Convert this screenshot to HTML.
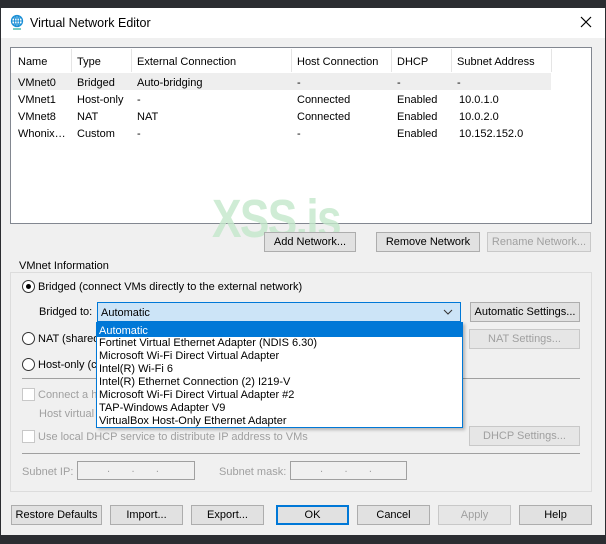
<!DOCTYPE html>
<html><head><meta charset="utf-8"><style>
*{box-sizing:border-box;margin:0;padding:0}
body{width:606px;height:544px;background:#2b2d31;position:relative;overflow:hidden;font-family:"Liberation Sans",sans-serif;font-size:11px;color:#000}
.a{position:absolute;white-space:nowrap}
.win{position:absolute;left:1px;top:8px;width:604px;height:527px;background:#f0f0f0}
.title{position:absolute;left:1px;top:8px;width:604px;height:30px;background:#fff}
.btn{position:absolute;height:20px;border:1px solid #adadad;background:#e1e1e1;text-align:center;line-height:19px}
.dis{color:#a0a0a0;border-color:#c8c8c8;background:#e6e6e6}
.radio{position:absolute;width:13px;height:13px;border:1px solid #333;border-radius:50%;background:#fff}
.chk{position:absolute;width:13px;height:13px;border:1px solid #c8c8c8;background:#fff}
.g{color:#a0a0a0}
</style></head><body>
<div class="win"></div>
<div class="title"></div>
<svg class="a" style="left:10px;top:14px" width="14" height="16" viewBox="0 0 14 16"><circle cx="7" cy="7" r="5.5" fill="none" stroke="#1a8fd6" stroke-width="1.3"/><path d="M1.5 7h11M7 1.5v11M3 4h8M3 10h8" stroke="#1a8fd6" stroke-width="1"/><ellipse cx="7" cy="7" rx="2.5" ry="5.5" fill="none" stroke="#1a8fd6"/><path d="M3 15h8" stroke="#2a9" stroke-width="1.2"/></svg>
<div class="a" style="left:30px;top:16px;font-size:12.5px">Virtual Network Editor</div>
<svg class="a" style="left:580px;top:16px" width="12" height="12"><path d="M1 1L11 11M11 1L1 11" stroke="#000" stroke-width="1.2"/></svg>

<div class="a" style="left:10px;top:47px;width:582px;height:177px;background:#fff;border:1px solid #828790"></div>
<div class="a" style="left:11px;top:73px;width:540px;height:17px;background:#eeeeee"></div>
<div class="a" style="left:71px;top:49px;width:1px;height:23px;background:#e5e5e5"></div>
<div class="a" style="left:131px;top:49px;width:1px;height:23px;background:#e5e5e5"></div>
<div class="a" style="left:291px;top:49px;width:1px;height:23px;background:#e5e5e5"></div>
<div class="a" style="left:391px;top:49px;width:1px;height:23px;background:#e5e5e5"></div>
<div class="a" style="left:451px;top:49px;width:1px;height:23px;background:#e5e5e5"></div>
<div class="a" style="left:551px;top:49px;width:1px;height:23px;background:#e5e5e5"></div>
<div class="a" style="left:18px;top:56px">Name</div><div class="a" style="left:77px;top:56px">Type</div><div class="a" style="left:137px;top:56px">External Connection</div><div class="a" style="left:297px;top:56px">Host Connection</div><div class="a" style="left:397px;top:56px">DHCP</div><div class="a" style="left:457px;top:56px">Subnet Address</div>
<div class="a" style="left:18px;top:77px">VMnet0</div><div class="a" style="left:77px;top:77px">Bridged</div><div class="a" style="left:137px;top:77px">Auto-bridging</div><div class="a" style="left:297px;top:77px">-</div><div class="a" style="left:397px;top:77px">-</div><div class="a" style="left:457px;top:77px">-</div>
<div class="a" style="left:18px;top:94px">VMnet1</div><div class="a" style="left:77px;top:94px">Host-only</div><div class="a" style="left:137px;top:94px">-</div><div class="a" style="left:297px;top:94px">Connected</div><div class="a" style="left:397px;top:94px">Enabled</div><div class="a" style="left:459px;top:94px">10.0.1.0</div>
<div class="a" style="left:18px;top:111px">VMnet8</div><div class="a" style="left:77px;top:111px">NAT</div><div class="a" style="left:137px;top:111px">NAT</div><div class="a" style="left:297px;top:111px">Connected</div><div class="a" style="left:397px;top:111px">Enabled</div><div class="a" style="left:459px;top:111px">10.0.2.0</div>
<div class="a" style="left:18px;top:128px">Whonix…</div><div class="a" style="left:77px;top:128px">Custom</div><div class="a" style="left:137px;top:128px">-</div><div class="a" style="left:297px;top:128px">-</div><div class="a" style="left:397px;top:128px">Enabled</div><div class="a" style="left:459px;top:128px">10.152.152.0</div>

<div class="a" style="left:212px;top:188px;font-size:54px;font-weight:bold;color:#c4e8cb;opacity:.8;letter-spacing:-2px;transform:scaleX(.82);transform-origin:left">XSS.is</div>

<div class="btn" style="left:264px;top:232px;width:92px">Add Network...</div>
<div class="btn" style="left:376px;top:232px;width:104px">Remove Network</div>
<div class="btn dis" style="left:487px;top:232px;width:104px">Rename Network...</div>

<div class="a" style="left:10px;top:272px;width:582px;height:220px;border:1px solid #dcdcdc"></div>
<div class="a" style="left:16px;top:260px;background:#f0f0f0;padding:0 3px">VMnet Information</div>
<div class="radio" style="left:22px;top:280px"></div><div class="a" style="left:26px;top:284px;width:5px;height:5px;border-radius:50%;background:#000"></div>
<div class="a" style="left:38px;top:281px">Bridged (connect VMs directly to the external network)</div>
<div class="a" style="left:39px;top:306px">Bridged to:</div>
<div class="a" style="left:97px;top:302px;width:364px;height:20px;background:#cce4f7;border:1px solid #0078d7"></div>
<div class="a" style="left:101px;top:307px">Automatic</div>
<svg class="a" style="left:443px;top:308px" width="10" height="8"><path d="M1 2l4 4 4-4" fill="none" stroke="#333"/></svg>
<div class="btn" style="left:470px;top:302px;width:110px">Automatic Settings...</div>
<div class="radio" style="left:22px;top:332px"></div><div class="a" style="left:38px;top:333px">NAT (shared</div>
<div class="btn dis" style="left:469px;top:329px;width:111px">NAT Settings...</div>
<div class="radio" style="left:22px;top:358px"></div><div class="a" style="left:38px;top:359px">Host-only (c</div>
<div class="a" style="left:22px;top:378px;width:558px;height:1px;background:#a0a0a0"></div>
<div class="chk" style="left:22px;top:388px"></div><div class="a g" style="left:38px;top:389px">Connect a host virtual adapter</div>
<div class="a g" style="left:39px;top:408px">Host virtual adapter</div>
<div class="chk" style="left:22px;top:430px"></div><div class="a g" style="left:38px;top:431px">Use local DHCP service to distribute IP address to VMs</div>
<div class="btn dis" style="left:469px;top:426px;width:111px">DHCP Settings...</div>
<div class="a" style="left:22px;top:453px;width:558px;height:1px;background:#a0a0a0"></div>
<div class="a g" style="left:22px;top:466px">Subnet IP:</div>
<div class="a" style="left:77px;top:461px;width:118px;height:19px;border:1px solid #a0a0a0;background:#f0f0f0"></div>
<div class="a g" style="left:107px;top:463px">.&nbsp;&nbsp;&nbsp;&nbsp;&nbsp;&nbsp;&nbsp;.&nbsp;&nbsp;&nbsp;&nbsp;&nbsp;&nbsp;&nbsp;.</div>
<div class="a g" style="left:219px;top:466px">Subnet mask:</div>
<div class="a" style="left:290px;top:461px;width:117px;height:19px;border:1px solid #a0a0a0;background:#f0f0f0"></div>
<div class="a g" style="left:320px;top:463px">.&nbsp;&nbsp;&nbsp;&nbsp;&nbsp;&nbsp;&nbsp;.&nbsp;&nbsp;&nbsp;&nbsp;&nbsp;&nbsp;&nbsp;.</div>

<div class="a" style="left:96px;top:322px;width:367px;height:106px;background:#fff;border:1px solid #0078d7;box-shadow:2px 2px 3px rgba(0,0,0,.25)"></div>
<div class="a" style="left:97px;top:323px;width:365px;height:14px;background:#0078d7"></div>
<div class="a" style="left:99px;top:324px;line-height:14px;color:#fff">Automatic</div>
<div class="a" style="left:99px;top:337px;line-height:13px">Fortinet Virtual Ethernet Adapter (NDIS 6.30)<br>Microsoft Wi-Fi Direct Virtual Adapter<br>Intel(R) Wi-Fi 6<br>Intel(R) Ethernet Connection (2) I219-V<br>Microsoft Wi-Fi Direct Virtual Adapter #2<br>TAP-Windows Adapter V9<br>VirtualBox Host-Only Ethernet Adapter</div>

<div class="btn" style="left:11px;top:505px;width:91px">Restore Defaults</div>
<div class="btn" style="left:110px;top:505px;width:73px">Import...</div>
<div class="btn" style="left:191px;top:505px;width:73px">Export...</div>
<div class="btn" style="left:276px;top:505px;width:73px;border:2px solid #0078d7;line-height:17px">OK</div>
<div class="btn" style="left:357px;top:505px;width:73px">Cancel</div>
<div class="btn dis" style="left:438px;top:505px;width:73px">Apply</div>
<div class="btn" style="left:519px;top:505px;width:73px">Help</div>
</body></html>
